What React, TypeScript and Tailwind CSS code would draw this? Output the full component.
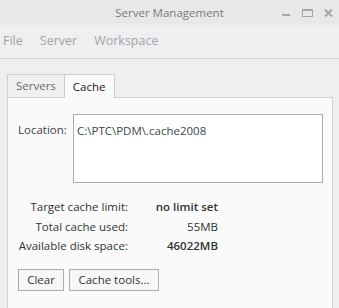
import React from "react";

const font = { fontFamily: '"Open Sans", "Noto Sans", sans-serif' };

const StatRow = ({ label, value, bold }: { label: string; value: string; bold?: boolean }) => (
  <div className="flex h-[19.5px] items-center">
    <span className="w-[110px] text-right text-[#333]">{label}</span>
    <span className={`w-[90px] text-right text-[#333] ${bold ? "font-semibold" : ""}`}>{value}</span>
  </div>
);

export default function App() {
  return (
    <div className="w-[339px] h-[308px] overflow-hidden bg-[#eeeff1] text-[11.5px] leading-none" style={font}>
      {/* title bar */}
      <div className="relative h-[25px] bg-[#e7e8ea] flex items-center justify-center">
        <span className="text-[#7a7a7a] text-[11.5px]">Server Management</span>
        <div className="absolute right-[6px] top-0 h-[25px] flex items-center gap-[11px]">
          <svg width="9" height="10" viewBox="0 0 9 10">
            <rect x="0" y="6" width="8" height="2" fill="#a6a6a6" />
          </svg>
          <svg width="11" height="10" viewBox="0 0 11 10">
            <rect x="0.5" y="1.5" width="10" height="7" fill="none" stroke="#a6a6a6" />
            <rect x="0" y="1" width="11" height="2" fill="#a6a6a6" />
          </svg>
          <svg width="9" height="10" viewBox="0 0 9 10">
            <path d="M1 1.5 L8 8.5 M8 1.5 L1 8.5" stroke="#a6a6a6" strokeWidth="2" />
          </svg>
        </div>
      </div>

      {/* menu bar */}
      <div className="h-[34px] flex items-center gap-[17px] pl-[3px] border-b border-[#d4d5d7] text-[12.5px] text-[#a3a3a3]">
        <span>File</span>
        <span>Server</span>
        <span>Workspace</span>
      </div>

      <div className="pl-[7px] pr-[6px] pt-[14px]">
        {/* tabs */}
        <div className="flex h-[24px] items-end">
          <div className="h-[23px] px-[8px] flex items-center border border-b-0 border-[#cfcfcf] bg-[#f0f0f1] text-[#6b6b6b]">
            Servers
          </div>
          <div className="relative z-10 h-[24px] px-[8px] -mb-px flex items-center border border-b-0 border-l-0 border-[#cfcfcf] bg-[#fafafa] text-[#222]">
            Cache
          </div>
        </div>

        {/* panel */}
        <div className="h-[220px] border border-[#cfcfcf] bg-[#fafafa] pl-[10px] pr-[9px] pt-[16px]">
          <div className="flex">
            <span className="w-[55px] pt-[10px] text-[#444]">Location:</span>
            <div className="flex-1 h-[69px] border border-[#adadad] bg-white px-[3px] pt-[10px] text-[#444]">
              C:\PTC\PDM\.cache2008
            </div>
          </div>

          <div className="mt-[14px]">
            <StatRow label="Target cache limit:" value="no limit set" bold />
            <StatRow label="Total cache used:" value="55MB" />
            <StatRow label="Available disk space:" value="46022MB" bold />
          </div>

          <div className="mt-[13px] flex gap-[5px]">
            <button className="h-[22px] w-[46px] border border-[#adadad] bg-[#f7f7f7] text-[#333]">Clear</button>
            <button className="h-[22px] w-[90px] border border-[#adadad] bg-[#f7f7f7] text-[#333]">Cache tools...</button>
          </div>
        </div>
      </div>
    </div>
  );
}
